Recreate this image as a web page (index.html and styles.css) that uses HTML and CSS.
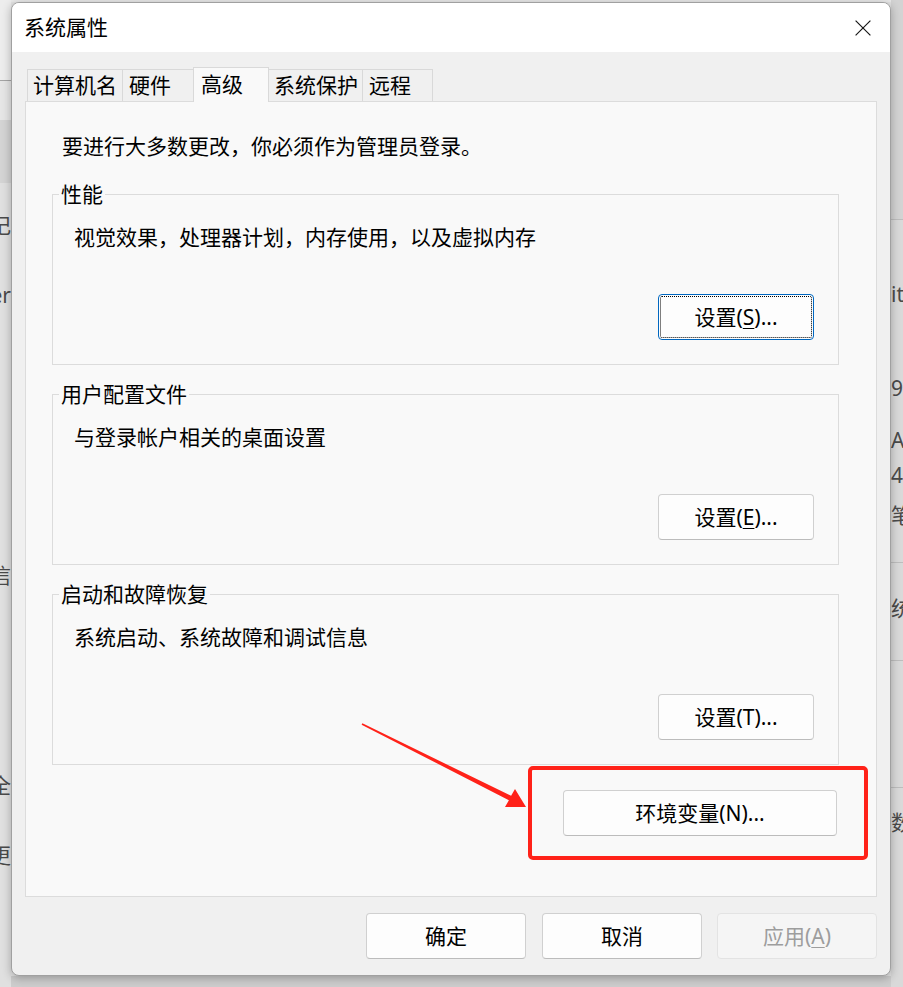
FILE: index.html
```html
<!DOCTYPE html>
<html lang="zh-CN">
<head>
<meta charset="utf-8">
<title>系统属性</title>
<link rel="stylesheet" href="styles.css">
</head>
<body>
<div class="screen">
  <div class="bg-left">
    <div class="bl-top"></div>
    <div class="bl-line"></div>
    <div class="bl-a"></div>
    <div class="bl-sel"></div>
    <div class="bl-rest">
      <div class="strip-txt end lt1">登记</div>
      <div class="strip-txt end lt2">Ser</div>
      <div class="strip-txt end lt3">通信</div>
      <div class="strip-txt end lt4">安全</div>
      <div class="strip-txt end lt5">更</div>
    </div>
  </div>
  <div class="bg-top"></div>

  <div class="dialog">
    <div class="titlebar">
      <span class="title">系统属性</span>
      <svg class="close" width="16" height="16" viewBox="0 0 16 16"><path d="M0.6 0.6 L15.4 15.4 M15.4 0.6 L0.6 15.4" stroke="#1a1a1a" stroke-width="1.2" fill="none"/></svg>
    </div>
    <div class="dlg-body">
      <div class="tabs">
        <div class="tab tab-name">计算机名</div>
        <div class="tab tab-hw">硬件</div>
        <div class="tab tab-adv active">高级</div>
        <div class="tab tab-prot">系统保护</div>
        <div class="tab tab-remote">远程</div>
      </div>
      <div class="panel">
        <p class="intro">要进行大多数更改，你必须作为管理员登录。</p>

        <fieldset class="group">
          <legend>性能</legend>
          <div class="group-body">
            <p class="desc">视觉效果，处理器计划，内存使用，以及虚拟内存</p>
            <div class="group-actions"><button class="btn btn-set focused">设置(<u>S</u>)...</button></div>
          </div>
        </fieldset>

        <fieldset class="group">
          <legend>用户配置文件</legend>
          <div class="group-body">
            <p class="desc">与登录帐户相关的桌面设置</p>
            <div class="group-actions"><button class="btn btn-set">设置(<u>E</u>)...</button></div>
          </div>
        </fieldset>

        <fieldset class="group">
          <legend>启动和故障恢复</legend>
          <div class="group-body">
            <p class="desc">系统启动、系统故障和调试信息</p>
            <div class="group-actions"><button class="btn btn-set">设置(T)...</button></div>
          </div>
        </fieldset>

        <div class="env-row"><button class="btn btn-env">环境变量(N)...</button></div>

        <div class="annot-box"></div>
        <svg class="annot-arrow" width="180" height="100" viewBox="0 0 180 100">
          <polygon points="6.6,9.7 153.9,85.2 150,92 171,92 160,74 156.1,80.8 7.4,8.3" fill="#ff2219"/>
        </svg>
      </div>
      <div class="footer">
        <button class="btn btn-foot btn-ok">确定</button>
        <button class="btn btn-foot">取消</button>
        <button class="btn btn-foot disabled">应用(<u>A</u>)</button>
      </div>
    </div>
  </div>

  <div class="bg-bottom"></div>
  <div class="bg-right">
    <div class="br-a"></div>
    <div class="br-line"></div>
    <div class="br-b">
      <div class="strip-txt rt1">itle</div>
      <div class="strip-txt rt2">9</div>
      <div class="strip-txt rt3">AC</div>
      <div class="strip-txt rt4">4</div>
      <div class="strip-txt rt5">笔记</div>
    </div>
    <div class="br-line"></div>
    <div class="br-c">
      <div class="strip-txt rt6">统</div>
    </div>
    <div class="br-line"></div>
    <div class="br-d"></div>
    <div class="br-line"></div>
    <div class="br-e">
      <div class="strip-txt rt7">数</div>
    </div>
  </div>
</div>
</body>
</html>
```

FILE: styles.css
```css
* {
  box-sizing: border-box;
}

html,
body {
  margin: 0;
  padding: 0;
}

body {
  font-family: "Noto Sans", "Noto Sans CJK SC", sans-serif;
  font-size: 21px;
  color: #000;
  background: #e2e2e2;
}

.screen {
  width: 903px;
  height: 987px;
  display: grid;
  grid-template-columns: 11px 880px 12px;
  grid-template-rows: 2px 974px 11px;
  grid-template-areas:
    "l t r"
    "l d r"
    "l b r";
  overflow: hidden;
}

/* ---------- background window (partly visible) ---------- */
.bg-left {
  grid-area: l;
  display: flex;
  flex-direction: column;
  overflow: hidden;
  background: #e1e1e1;
}

.bl-top { height: 80px; background: #ededed; }
.bl-line { height: 1px; background: #a5a5a5; }
.bl-a { height: 39px; background: #e6e6e6; }
.bl-sel { height: 63px; background: #d4d4d4; }
.bl-rest { flex: 1; background: #e0e0e0; display: flex; flex-direction: column; }

.strip-txt {
  height: 28px;
  line-height: 28px;
  display: flex;
  white-space: nowrap;
  color: #4a4a4a;
  flex-shrink: 0;
}

.strip-txt.end { justify-content: flex-end; }

.lt1 { margin-top: 28px; }
.lt2 { margin-top: 42px; }
.lt3 { margin-top: 252px; }
.lt4 { margin-top: 182px; }
.lt5 { margin-top: 42px; }

.bg-top { grid-area: t; background: #e9e9e9; }
.bg-bottom { grid-area: b; background: #cdcdcd; }

.bg-right {
  grid-area: r;
  display: flex;
  flex-direction: column;
  overflow: hidden;
  background: #d9d9d9;
}

.br-a { height: 219px; background: #d3d3d3; }
.br-line { height: 1px; background: #bdbdbd; flex-shrink: 0; }
.br-b { height: 342px; display: flex; flex-direction: column; }
.br-c { height: 97px; display: flex; flex-direction: column; }
.br-d { height: 126px; }
.br-e { flex: 1; display: flex; flex-direction: column; }

.rt1 { margin-top: 60px; }
.rt2 { margin-top: 66px; }
.rt3 { margin-top: 24px; }
.rt4 { margin-top: 7px; }
.rt5 { margin-top: 12px; }
.rt6 { margin-top: 31px; }
.rt7 { margin-top: 20px; }

/* ---------- dialog ---------- */
.dialog {
  grid-area: d;
  position: relative;
  z-index: 1;
  display: flex;
  flex-direction: column;
  background: #f0f0f0;
  border: 1px solid #a0a0a0;
  border-radius: 8px;
  box-shadow: 0 2px 10px rgba(0, 0, 0, 0.28);
  overflow: hidden;
}

.titlebar {
  height: 49px;
  flex-shrink: 0;
  background: #fff;
  display: flex;
  align-items: center;
  justify-content: space-between;
  padding: 0 19px 0 12px;
}

.title {
  line-height: 1;
}

.close {
  display: block;
}

.dlg-body {
  flex: 1;
  display: flex;
  flex-direction: column;
  padding: 15px 13px 16px 13px;
}

/* ---------- tabs ---------- */
.tabs {
  height: 34px;
  display: flex;
  align-items: flex-end;
  margin-left: 2px;
  position: relative;
  z-index: 2;
  flex-shrink: 0;
}

.tab {
  height: 32px;
  line-height: 30px;
  border: 1px solid #d9d9d9;
  border-bottom: 0;
  margin-right: -1px;
  padding-left: 5px;
  background: #f0f0f0;
  white-space: nowrap;
}

.tab.active {
  height: 35px;
  line-height: 32px;
  margin-bottom: -1px;
  padding-left: 7px;
  background: #f9f9f9;
  position: relative;
  z-index: 1;
}

.tab-name { width: 96px; }
.tab-hw { width: 72px; padding-left: 6px; }
.tab-adv { width: 76px; }
.tab-prot { width: 95px; }
.tab-remote { width: 71px; padding-left: 6px; }

/* ---------- panel ---------- */
.panel {
  height: 796px;
  flex-shrink: 0;
  position: relative;
  border: 1px solid #dcdcdc;
  background: #f9f9f9;
  padding: 30px 37px 0 26px;
}

.intro {
  margin: 0 0 20px 10px;
  line-height: 28px;
}

.group {
  margin: 0;
  padding: 0;
  min-width: 0;
  border: 1px solid #dcdcdc;
}

.group + .group {
  margin-top: 15px;
}

.group legend {
  margin-left: 6px;
  padding: 0 2px;
  line-height: 28px;
}

.group-body {
  padding: 15px 24px 24px 21px;
}

.desc {
  margin: 0;
  line-height: 28px;
}

.group-actions {
  display: flex;
  justify-content: flex-end;
  margin-top: 43px;
}

.env-row {
  display: flex;
  justify-content: flex-end;
  margin-top: 25px;
  padding-right: 2px;
}

/* ---------- buttons ---------- */
.btn {
  font: inherit;
  color: #000;
  height: 46px;
  padding: 0;
  display: flex;
  align-items: center;
  justify-content: center;
  line-height: 1;
  background: #fdfdfd;
  border: 1px solid #d0d0d0;
  border-bottom-color: #bcbcbc;
  border-radius: 4px;
}

.btn u {
  text-decoration-thickness: 1px;
  text-underline-offset: 3px;
}

.btn-set { width: 156px; }
.btn-env { width: 274px; }

.btn.focused {
  border-color: #0067c0;
  outline: 1px dotted #000;
  outline-offset: -3px;
}

.footer {
  display: flex;
  justify-content: flex-end;
  gap: 15px;
  margin-top: 16px;
}

.btn-foot { width: 160px; }
.btn-ok { margin-right: 1px; }

.btn.disabled {
  color: #9d9d9d;
  background: #f5f5f5;
  border-color: #e3e3e3;
}

/* ---------- annotation overlay ---------- */
.annot-box {
  position: absolute;
  left: 502px;
  top: 664px;
  width: 340px;
  height: 94px;
  border: 4px solid #ff2219;
  border-radius: 5px;
}

.annot-arrow {
  position: absolute;
  left: 329px;
  top: 613px;
  display: block;
}
```
